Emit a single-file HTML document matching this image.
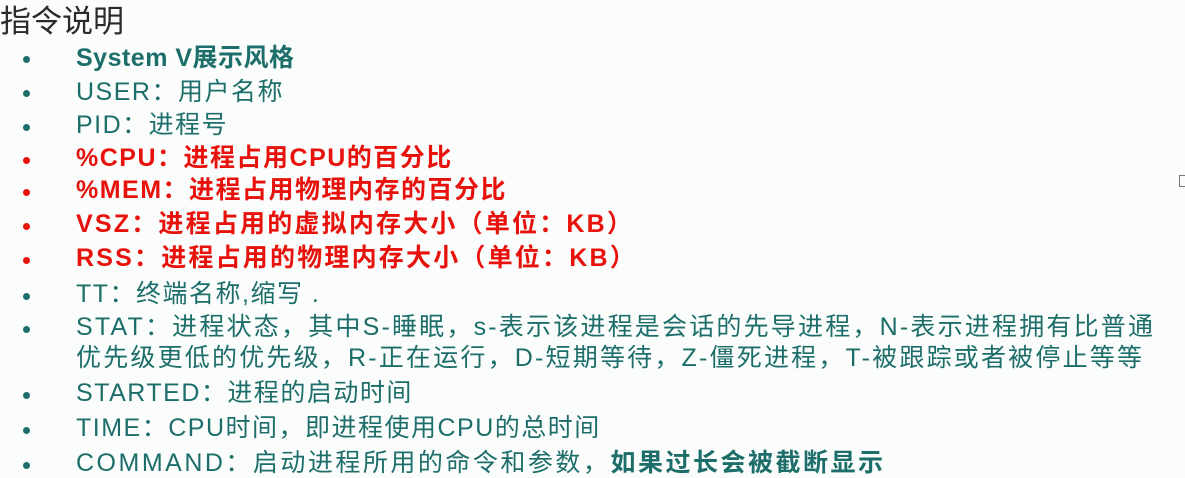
<!DOCTYPE html>
<html><head><meta charset="utf-8"><style>
body{margin:0;width:1185px;height:478px;background:#fbfdfc;overflow:hidden;position:relative;font-family:"Liberation Sans","Noto Sans CJK SC",sans-serif;}
.t{position:absolute;left:0;top:-4px;font-size:31px;color:#2a2a2a;}
.l{position:absolute;left:76px;font-size:25px;line-height:28px;color:#1d6e6a;white-space:nowrap;letter-spacing:1.5px;}
.b{position:absolute;left:23px;width:7px;height:7px;border-radius:50%;background:#1d6e6a;}
.r{color:#e8120c;font-weight:bold;letter-spacing:1.5px;}
.g{font-weight:bold;letter-spacing:0.5px;}
.ic{position:absolute;left:1179px;top:175px;width:6px;height:10px;border:1px solid #777;border-right:none;}
</style></head><body>
<div class="t">指令说明</div>
<div class="b" style="top:56px"></div><div class="l g" style="top:44px">System V展示风格</div>
<div class="b" style="top:90px"></div><div class="l" style="top:78px">USER：用户名称</div>
<div class="b" style="top:124px"></div><div class="l" style="top:111px">PID：进程号</div>
<div class="b r" style="top:157px;background:#e8120c"></div><div class="l r" style="top:144px">%CPU：进程占用CPU的百分比</div>
<div class="b" style="top:189px;background:#e8120c"></div><div class="l r" style="top:176px">%MEM：进程占用物理内存的百分比</div>
<div class="b" style="top:223px;background:#e8120c"></div><div class="l r" style="top:210px;letter-spacing:2.2px">VSZ：进程占用的虚拟内存大小（单位：KB）</div>
<div class="b" style="top:257px;background:#e8120c"></div><div class="l r" style="top:244px;letter-spacing:2.2px">RSS：进程占用的物理内存大小（单位：KB）</div>
<div class="b" style="top:293px"></div><div class="l" style="top:280px">TT：终端名称,缩写 .</div>
<div class="b" style="top:326px"></div><div class="l" style="top:313px;letter-spacing:2.2px">STAT：进程状态，其中S-睡眠，s-表示该进程是会话的先导进程，N-表示进程拥有比普通</div>
<div class="l" style="top:344px;letter-spacing:2.2px">优先级更低的优先级，R-正在运行，D-短期等待，Z-僵死进程，T-被跟踪或者被停止等等</div>
<div class="b" style="top:392px"></div><div class="l" style="top:379px">STARTED：进程的启动时间</div>
<div class="b" style="top:427px"></div><div class="l" style="top:414px">TIME：CPU时间，即进程使用CPU的总时间</div>
<div class="b" style="top:462px"></div><div class="l" style="top:449px;letter-spacing:2.5px">COMMAND：启动进程所用的命令和参数，<b>如果过长会被截断显示</b></div>
<div class="ic"></div>
</body></html>
